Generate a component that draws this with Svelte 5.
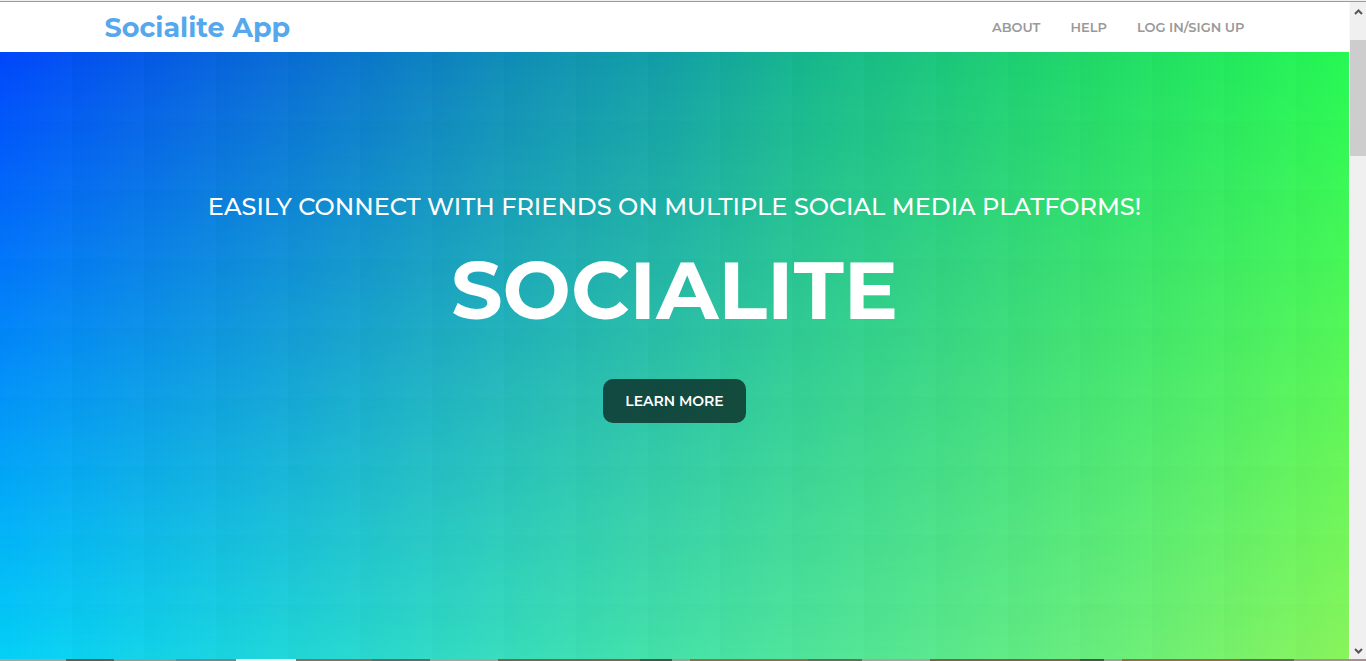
<script>
  const links = [
    { label: 'About', href: '#about' },
    { label: 'Help', href: '#help' },
    { label: 'Log in/Sign up', href: '#login' }
  ];
</script>

<div class="window">
  <div class="body">
    <div class="page">
      <header>
        <div class="container">
          <a class="brand" href="#top">Socialite App</a>
          <nav>
            {#each links as link}
              <a href={link.href}>{link.label}</a>
            {/each}
          </nav>
        </div>
      </header>
      <main>
        <p>Easily connect with friends on multiple social media platforms!</p>
        <h1>Socialite</h1>
        <a class="button" href="#about">Learn more</a>
      </main>
    </div>
    <div class="scrollbar" aria-hidden="true">
      <svg width="9" height="6" viewBox="0 0 9 6"><path d="M1 5L4.500 1.500L8 5" /></svg>
      <div class="thumb"></div>
      <svg width="9" height="6" viewBox="0 0 9 6"><path d="M1 1L4.500 4.500L8 1" /></svg>
    </div>
  </div>
  <div class="strip"></div>
</div>

<style>
  :global(body) {
    margin: 0;
    font-family: Montserrat, Inter, sans-serif;
  }

  .window {
    display: flex;
    flex-direction: column;
    min-height: 100vh;
    box-sizing: border-box;
    border-top: 1px solid #f0f0f0;
  }

  .body {
    flex: 1;
    display: flex;
    border-top: 1px solid #999;
  }

  .page {
    flex: 1;
    display: flex;
    flex-direction: column;
  }

  header {
    background: #fff;
  }

  .container {
    max-width: 1140px;
    height: 50px;
    margin: 0 auto;
    display: flex;
    align-items: center;
    justify-content: space-between;
  }

  a {
    text-decoration: none;
  }

  .brand {
    color: #55a8ec;
    font-size: 27px;
    font-weight: 700;
  }

  nav {
    display: flex;
    gap: 30px;
  }

  nav a {
    color: #999;
    font-size: 13px;
    font-weight: 600;
    text-transform: uppercase;
  }

  main {
    position: relative;
    isolation: isolate;
    flex: 1;
    display: flex;
    flex-direction: column;
    align-items: center;
    padding-top: 139px;
    color: #fff;
    text-align: center;
    text-transform: uppercase;
    background: linear-gradient(90deg, #0048ff 0%, #0558ea 10%, #0a76ce 26%, #0f8fb8 38%, #12a2a6 50%, #16b98e 60%, #1ac680 68%, #1fdc68 81%, #24fb54 100%);
  }

  main::before,
  main::after {
    content: '';
    position: absolute;
    inset: 0;
    z-index: -1;
  }

  main::before {
    background: linear-gradient(90deg, #02d2fa 0%, #18d6e0 17%, #30dcc4 33%, #42e2aa 48%, #56e890 67%, #6cf078 84%, #88f65a 100%);
    mask-image: linear-gradient(#0000, #000);
  }

  main::after {
    background:
      repeating-linear-gradient(90deg, #00000003 0, #ffffff03 72px),
      repeating-linear-gradient(#00000002 0, #ffffff02 69px);
  }

  p {
    margin: 0;
    font-size: 24px;
    line-height: 32px;
    font-weight: 500;
  }

  h1 {
    margin: 18px 0 40px;
    font-size: 81px;
    line-height: 98px;
    font-weight: 700;
  }

  .button {
    padding: 12px 22px;
    border-radius: 10px;
    background: #0a2420c4;
    color: #fff;
    font-size: 14px;
    line-height: 20px;
    font-weight: 600;
  }

  .scrollbar {
    width: 17px;
    box-sizing: border-box;
    padding: 7px 0 5px;
    border-left: 1px solid #fafafa;
    display: flex;
    flex-direction: column;
    align-items: center;
    background: #f0f0f0;
  }

  .scrollbar svg {
    fill: none;
    stroke: #555;
    stroke-width: 2;
  }

  .thumb {
    width: 100%;
    height: 116px;
    margin: 25px 0 auto;
    background: #cdcdcd;
  }

  .strip {
    height: 2px;
    background: linear-gradient(90deg, #a9a29d 0 66px, #7d5448 66px 114px, #9a9a90 114px 176px, #75868e 176px 236px, #eef8fa 236px 296px, #95685b 296px 372px, #686966 372px 430px, #a9a29d 430px 498px, #83604f 498px 640px, #4f5348 640px 672px, #9aa392 672px 690px, #9a6a50 690px 808px, #6c6a5a 808px 862px, #a9a29d 862px 930px, #83604f 930px 1080px, #4f5348 1080px 1104px, #9aa392 1104px 1122px, #9a6a50 1122px 1240px, #6c6a5a 1240px 1294px, #a99090 1294px);
  }
</style>
